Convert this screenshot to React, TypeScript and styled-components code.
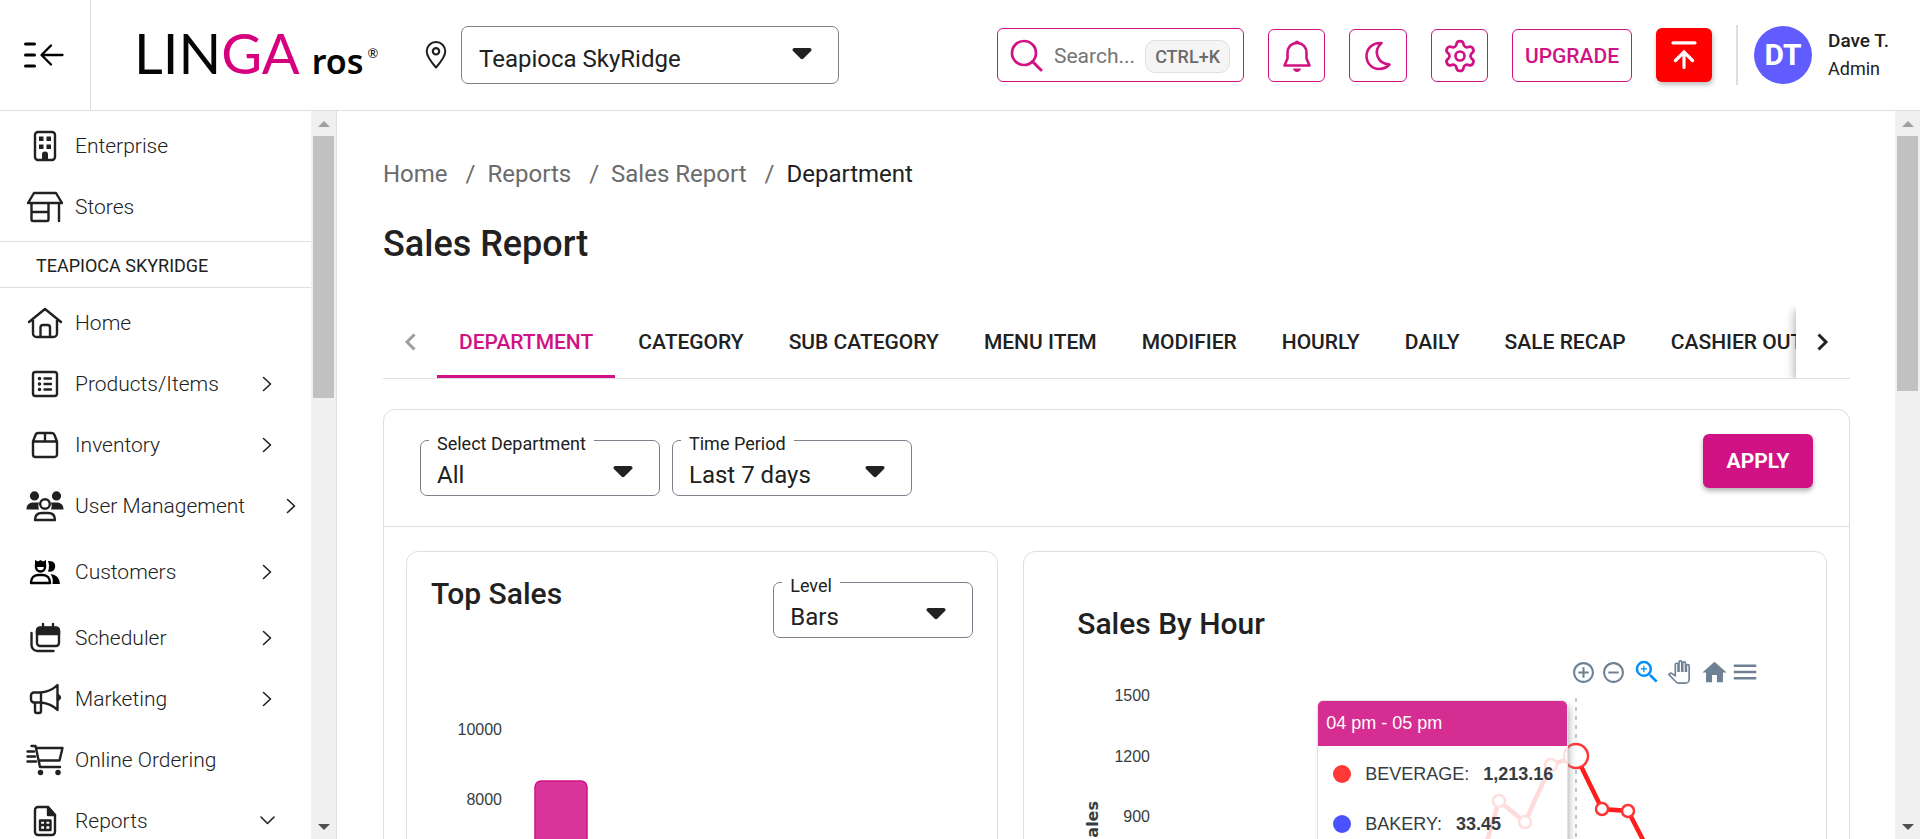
import React from 'react';
import styled, { createGlobalStyle } from 'styled-components';
import { Settings } from 'lucide-react';
import { MdAddCircleOutline, MdHome, MdMenu, MdRemoveCircleOutline, MdZoomIn } from 'react-icons/md';

const color = {
  pink: '#d11284',
  text: '#212121',
  muted: '#757575',
  line: '#dedede',
  outline: '#7d818c',
};

const GlobalStyle = createGlobalStyle`
  *, *::before, *::after { box-sizing: border-box; }
  body {
    margin: 0;
    background: #fff;
    color: ${color.text};
    font-family: Roboto, "Liberation Sans", sans-serif;
    overflow: hidden;
  }
  button, input, select { font: inherit; color: inherit; }
  a { color: inherit; text-decoration: none; }
  svg { display: block; flex: none; }
`;

/* ---------- shell ---------- */

const Page = styled.div`
  display: flex;
  flex-direction: column;
  height: 100vh;
`;

const Header = styled.header`
  display: flex;
  align-items: center;
  flex: none;
  height: 111px;
  border-bottom: 1px solid ${color.line};
`;

const Body = styled.div`
  display: flex;
  flex: 1;
  min-height: 0;
`;

/* ---------- header ---------- */

const MenuToggle = styled.button`
  display: flex;
  align-items: center;
  align-self: stretch;
  width: 91px;
  padding: 0 0 0 24px;
  border: 0;
  border-right: 1px solid ${color.line};
  background: none;
`;

const Logo = styled.a`
  display: flex;
  align-items: baseline;
  width: 244px;
  margin: 0 0 4px 43px;
  color: #050505;
  font-family: Lato, sans-serif;
  font-size: 56px;
  line-height: 64px;
  white-space: nowrap;
`;

const LogoAccent = styled.span`
  color: #d6007f;
`;

const LogoSuffix = styled.span`
  margin-left: 12px;
  font-family: "Noto Sans", sans-serif;
  font-size: 34px;
  font-weight: 600;
  line-height: 36px;
`;

const LogoMark = styled.span`
  margin-left: 4px;
  font-size: 13px;
  line-height: 13px;
  align-self: center;
`;

const StorePicker = styled.label`
  display: flex;
  align-items: center;
  gap: 14px;
  width: 414px;
  margin-left: 47px;
`;

const HeaderTools = styled.div`
  display: flex;
  align-items: center;
  gap: 24px;
  margin-left: auto;
  padding-right: 31px;
`;

const SearchBox = styled.label`
  display: flex;
  align-items: center;
  width: 247px;
  height: 54px;
  padding: 2px 13px 0 12px;
  border: 1px solid ${color.pink};
  border-radius: 6px;
  color: ${color.pink};
`;

const SearchInput = styled.input`
  flex: 1;
  min-width: 0;
  margin-left: 11px;
  padding: 0;
  border: 0;
  outline: 0;
  background: none;
  font-size: 21px;
  color: ${color.muted};
  &::placeholder { color: ${color.muted}; opacity: 1; }
`;

const Shortcut = styled.kbd`
  padding: 0 9px;
  border: 1px solid #e0e0e0;
  border-radius: 10px;
  background: #f5f5f5;
  color: #6b6b6b;
  font-family: inherit;
  font-size: 18px;
  font-weight: 500;
  line-height: 31px;
`;

const OutlineButton = styled.button<{ $width: number }>`
  display: flex;
  align-items: center;
  justify-content: center;
  width: ${(p) => p.$width}px;
  height: 53px;
  padding: 1px 0 0;
  border: 1px solid ${color.pink};
  border-radius: 6px;
  background: #fff;
  color: ${color.pink};
  font-size: 21px;
  font-weight: 500;
`;

const UploadButton = styled.button`
  display: flex;
  align-items: center;
  justify-content: center;
  width: 56px;
  height: 54px;
  padding: 0;
  border: 0;
  border-radius: 6px;
  background: #f00;
  color: #fff;
  box-shadow: 1px 3px 5px rgba(0, 0, 0, 0.25);
`;

const Profile = styled.div`
  display: flex;
  align-items: center;
  height: 60px;
  padding-left: 16px;
  border-left: 2px solid ${color.line};
`;

const Avatar = styled.div`
  width: 58px;
  border-radius: 50%;
  background: #615cff;
  color: #fff;
  font-size: 30px;
  font-weight: 700;
  line-height: 58px;
  text-align: center;
`;

const UserName = styled.div`
  margin-left: 16px;
  font-size: 19px;
  font-weight: 500;
  line-height: 28px;
`;

const UserRole = styled.div`
  font-size: 18px;
  font-weight: 400;
`;

/* ---------- select fields ---------- */

const SelectFrame = styled.fieldset<{ $width?: number; $labelled: boolean }>`
  position: relative;
  display: flex;
  flex: ${(p) => (p.$width ? 'none' : 1)};
  width: ${(p) => (p.$width ? `${p.$width}px` : 'auto')};
  height: ${(p) => (p.$labelled ? 65 : 58)}px;
  min-width: 0;
  margin: 0;
  padding: 0;
  border: 1px solid ${color.outline};
  border-radius: 7px;
`;

const SelectLegend = styled.legend`
  margin-left: 8px;
  padding: 8px 8px 0;
  font-size: 18px;
  line-height: 10px;
`;

const SelectControl = styled.select<{ $labelled: boolean }>`
  width: 100%;
  height: 100%;
  padding: ${(p) => (p.$labelled ? 6 : 8)}px 60px 0 ${(p) => (p.$labelled ? 16 : 17)}px;
  border: 0;
  outline: 0;
  appearance: none;
  background: none;
  font-size: 24px;
`;

const SelectArrow = styled.svg<{ $labelled: boolean }>`
  position: absolute;
  top: ${(p) => (p.$labelled ? 17 : 21)}px;
  right: 26px;
  pointer-events: none;
`;

type SelectProps = { label?: string; name: string; value: string; width?: number };

function SelectField({ label, name, value, width }: SelectProps) {
  return (
    <SelectFrame $width={width} $labelled={!!label}>
      {label && <SelectLegend>{label}</SelectLegend>}
      <SelectControl aria-label={name} defaultValue={value} $labelled={!!label}>
        <option>{value}</option>
      </SelectControl>
      <SelectArrow $labelled={!!label} width="20" height="12" viewBox="0 0 20 12">
        <path d="M2 0H18Q20.5 1 19 3L11.5 10.5Q10 12 8.500 10.500L1 3Q-.5 1 2 0Z" fill="currentColor" />
      </SelectArrow>
    </SelectFrame>
  );
}

/* ---------- sidebar ---------- */

const Sidebar = styled.aside`
  display: flex;
  flex: none;
  width: 337px;
  border-right: 1px solid ${color.line};
`;

const Nav = styled.nav`
  flex: 1;
  overflow: hidden;
`;

const NavGroup = styled.div`
  padding: 4px 0;
`;

const NavHeading = styled.h2`
  margin: 0;
  padding: 2px 0 0 36px;
  border: solid ${color.line};
  border-width: 1px 0;
  font-size: 18px;
  font-weight: 400;
  line-height: 43px;
`;

const NavLink = styled.a<{ $tall?: boolean; $wide?: boolean }>`
  display: flex;
  align-items: center;
  gap: 11px;
  height: ${(p) => (p.$tall ? 71 : 61)}px;
  padding: 0 ${(p) => (p.$wide ? 12 : 36)}px 0 26px;
  font-size: 21px;
`;

const NavText = styled.span`
  flex: 1;
  font-weight: 300;
`;

const Track = styled.div`
  display: flex;
  flex-direction: column;
  flex: none;
  width: 25px;
  background: #f0f0f0;
`;

const TrackEnd = styled.div<{ $shade: string }>`
  display: flex;
  align-items: center;
  justify-content: center;
  height: 25px;
  color: ${(p) => p.$shade};
`;

const Thumb = styled.div<{ $share: number }>`
  height: ${(p) => p.$share}%;
  margin: 0 2px;
  background: #c1c1c1;
`;

const ThumbArea = styled.div`
  flex: 1;
`;

function Scrollbar({ share }: { share: number }) {
  return (
    <Track aria-hidden="true">
      <TrackEnd $shade="#a0a0a0">
        <svg width="12" height="6" viewBox="0 0 12 6"><path d="M6 0l6 6H0z" fill="currentColor" /></svg>
      </TrackEnd>
      <ThumbArea><Thumb $share={share} /></ThumbArea>
      <TrackEnd $shade="#505050">
        <svg width="12" height="6" viewBox="0 0 12 6"><path d="M0 0h12L6 6z" fill="currentColor" /></svg>
      </TrackEnd>
    </Track>
  );
}

const icons: Record<string, React.ReactNode> = {
  Enterprise: (
    <>
      <rect x="9" y="2" width="20" height="28" rx="3" />
      <path d="M13 6.500h4.500v4.500H13zM20.500 6.500H25v4.500h-4.500zM13 14.500h4.500V19H13zM20.500 14.500H25V19h-4.500zM16 30v-5.500a3 3 0 0 1 6 0V30z" fill="currentColor" stroke="none" />
    </>
  ),
  Stores: <path d="M8 2h22l6 10H2zM5.500 12v16.500a1.500 1.500 0 0 0 1.500 1.500h14a1.500 1.500 0 0 0 1.500-1.500V12M5.500 21h17M33 12v18" />,
  Home: <path d="M3 15L19 2l16 13M7 13v13.500A3.500 3.500 0 0 0 10.500 30h17a3.500 3.500 0 0 0 3.500-3.500V13M14.500 30V20.500A2.500 2.500 0 0 1 17 18h4.500a2.500 2.500 0 0 1 2.500 2.500V30" />,
  'Products/Items': (
    <>
      <rect x="7" y="4" width="24" height="24" rx="2.500" />
      <path d="M18.500 10.500H25M18.500 16H25M18.500 21.500H25" />
      <path d="M13.500 10.500h.01M13.500 16h.01M13.500 21.500h.01" strokeWidth="3.600" />
    </>
  ),
  Inventory: <path d="M7 12.500L9.500 6A3 3 0 0 1 12.500 4h13a3 3 0 0 1 3 2L31 12.500V25.500a2.500 2.500 0 0 1-2.500 2.500h-19A2.500 2.500 0 0 1 7 25.500V12.500H31M19 4v8.500" />,
  'User Management': (
    <>
      <path d="M8.500 1.300a4.600 4.600 0 1 1 0 9.200a4.600 4.600 0 0 1 0-9.200zM30.500 1.300a4.600 4.600 0 1 1 0 9.200a4.600 4.600 0 0 1 0-9.200zM.5 19.500C.5 14 4 12.500 8 12.500h5q-1.500 3.500 0 7zM37.500 19.500C37.500 14 34 12.500 30 12.500h-5q1.500 3.500 0 7z" fill="currentColor" stroke="none" />
      <circle cx="19" cy="14" r="4.800" />
      <path d="M9 30c0-5 3-7 7-7h6c4 0 7 2 7 7z" />
    </>
  ),
  Customers: (
    <g color="#000" stroke="#000">
      <path d="M9 4l3 1.500L14.500 4l2.500 1.500L20 4v7H9zM22 5c6-.5 8 3 7 7q-2 5-7 3.500q2-5 0-10.500zM24.500 18q9 1 9.500 10h-7.500q1-6-2-10z" fill="currentColor" stroke="none" />
      <path d="M10 9v2c0 6 9 6 9 0V9zM5 27c0-5 3-8 7-8h5c4 0 7 3 7 8z" />
    </g>
  ),
  Scheduler: (
    <>
      <rect x="11" y="6" width="22" height="18" rx="3" />
      <path d="M11 12V8.500A3 3 0 0 1 14 5.500h16a3 3 0 0 1 3 3V12z" fill="currentColor" />
      <path d="M17 2v3M27 2v3M5.500 11v12a6 6 0 0 0 6 6H27.500" />
    </>
  ),
  Marketing: (
    <>
      <path d="M15 9.500H8A3 3 0 0 0 5 12.500v4A3 3 0 0 0 8 19.500h7zQ25 8.500 31.500 2v25Q25 20.500 15 19.500M9 20v8a2 2 0 0 0 2 2h2a2 2 0 0 0 2-2V20" />
      <path d="M32 12q4 2.500 0 5z" fill="currentColor" />
    </>
  ),
  'Online Ordering': (
    <>
      <path d="M5.500 2H9.500L14 23H34M10 4H36.500L33.500 16.500H13M1.500 7.500H8M1.500 12.500H9M1.500 17.500H10" />
      <path d="M14.500 28.500h.01M32 28.500h.01" strokeWidth="5.500" />
    </>
  ),
  Reports: (
    <>
      <path d="M12 2H22l7 8v17a3 3 0 0 1-3 3H12a3 3 0 0 1-3-3V5a3 3 0 0 1 3-3zM14 15.500H24.500V25H14zM14 20H24.500M19.200 15.500V25" />
      <path d="M22 2v8h7z" fill="currentColor" />
    </>
  ),
};

function NavItem({ label, arrow }: { label: string; arrow?: 'right' | 'down' }) {
  return (
    <NavLink href="#" $tall={label === 'Customers'} $wide={label === 'User Management'}>
      <svg width="38" height="32" viewBox="0 0 38 32" fill="none" stroke="currentColor" strokeWidth="2.400" strokeLinecap="round" strokeLinejoin="round">
        {icons[label]}
      </svg>
      <NavText>{label}</NavText>
      {arrow && (
        <svg width="16" height="16" viewBox="0 0 16 16" fill="none" stroke="currentColor" strokeWidth="1.600" strokeLinecap="round" strokeLinejoin="round">
          <path d={arrow === 'right' ? 'M4.500 1.500L11.500 8l-7 6.500' : 'M2 4L8.500 10.500l6.500-6.500'} />
        </svg>
      )}
    </NavLink>
  );
}

/* ---------- main ---------- */

const Main = styled.main`
  flex: 1;
  min-width: 0;
  padding: 48px 45px 0 46px;
  overflow: hidden;
`;

const Breadcrumb = styled.nav`
  display: flex;
  color: #6b6b6b;
  font-size: 24px;
  line-height: 30px;
`;

const Crumb = styled.a<{ $current?: boolean }>`
  color: ${(p) => (p.$current ? color.text : 'inherit')};
  &:not(:first-child)::before {
    content: '/';
    margin: 0 12px 0 18px;
    color: #6b6b6b;
  }
`;

const Title = styled.h1`
  margin: 32px 0 0;
  font-size: 36px;
  font-weight: 500;
  line-height: 46px;
`;

const TabBar = styled.div`
  display: flex;
  height: 73px;
  margin-top: 39px;
  border-bottom: 1px solid ${color.line};
`;

const TabList = styled.div`
  display: flex;
  flex: 1;
  gap: 1px;
  min-width: 0;
  overflow: hidden;
`;

const Tab = styled.button<{ $active?: boolean }>`
  flex: none;
  padding: 3px 22px 0;
  border: 0;
  border-bottom: 3px solid ${(p) => (p.$active ? color.pink : 'transparent')};
  background: none;
  color: ${(p) => (p.$active ? color.pink : color.text)};
  font-size: 21px;
  font-weight: 500;
`;

const TabScroll = styled.button<{ $disabled?: boolean }>`
  display: flex;
  align-items: center;
  justify-content: center;
  width: 54px;
  padding: 0;
  border: 0;
  background: #fff;
  color: ${(p) => (p.$disabled ? '#9e9e9e' : color.text)};
  box-shadow: ${(p) => (p.$disabled ? 'none' : '0 4px 10px rgba(0, 0, 0, 0.4)')};
  clip-path: inset(0 0 0 -20px);
`;

const Panel = styled.section`
  margin-top: 30px;
  border: 1px solid ${color.line};
  border-radius: 12px;
`;

const Filters = styled.form`
  display: flex;
  align-items: flex-start;
  gap: 12px;
  height: 117px;
  padding: 21px 36px 0;
  border-bottom: 1px solid ${color.line};
`;

const ApplyButton = styled.button`
  width: 110px;
  height: 54px;
  margin: 3px 0 0 auto;
  border: 0;
  border-radius: 6px;
  background: ${color.pink};
  color: #fff;
  font-size: 21px;
  font-weight: 700;
  box-shadow: 0 3px 5px rgba(0, 0, 0, 0.3);
`;

const Cards = styled.div`
  display: grid;
  grid-template-columns: 14fr 19fr;
  gap: 25px;
  padding: 24px 22px;
`;

const Card = styled.article`
  min-width: 0;
  height: 620px;
  border: 1px solid ${color.line};
  border-radius: 12px;
  overflow: hidden;
`;

const CardHead = styled.div`
  display: flex;
  justify-content: space-between;
  height: 136px;
  padding: 21px 24px 0;
`;

const CardTitle = styled.h2`
  margin: 0;
  font-size: 30px;
  font-weight: 500;
  line-height: 42px;
`;

const HourTitle = styled(CardTitle)`
  padding: 51px 53px 0;
`;

const Toolbar = styled.div`
  display: flex;
  align-items: center;
  justify-content: flex-end;
  height: 28px;
  margin-top: 13px;
  padding-right: 66px;
`;

const Tool = styled.button<{ $active?: boolean; $gap?: number }>`
  margin: 0 0 0 ${(p) => p.$gap ?? 0}px;
  padding: 0;
  border: 0;
  background: none;
  color: ${(p) => (p.$active ? '#008ffb' : '#6e8192')};
`;

const Plot = styled.div`
  position: relative;
`;

const AxisText = styled.text`
  fill: #373d3f;
  font-family: "Liberation Sans", sans-serif;
  font-size: 16px;
  text-anchor: end;
`;

const AxisTitle = styled(AxisText)`
  font-family: "DejaVu Sans", sans-serif;
  font-weight: 700;
`;

const Tooltip = styled.div`
  position: absolute;
  top: 14px;
  left: 293px;
  width: 251px;
  height: 210px;
  border: 1px solid #e3e3e3;
  border-radius: 6px;
  background: rgba(255, 255, 255, 0.84);
  box-shadow: 3px 3px 8px -3px #999;
  font-family: "Liberation Sans", sans-serif;
  font-size: 18px;
  overflow: hidden;
`;

const TooltipTitle = styled.div`
  padding: 0 8px;
  background: #d62d93;
  color: #fff;
  line-height: 45px;
`;

const TooltipRow = styled.div<{ $dot: string }>`
  display: flex;
  align-items: center;
  gap: 14px;
  height: 50px;
  padding: 6px 0 0 15px;
  color: #373d3f;
  white-space: nowrap;
  &::before {
    content: '';
    flex: none;
    width: 18px;
    height: 18px;
    border-radius: 50%;
    background: ${(p) => p.$dot};
  }
`;

const tabs = ['DEPARTMENT', 'CATEGORY', 'SUB CATEGORY', 'MENU ITEM', 'MODIFIER', 'HOURLY', 'DAILY', 'SALE RECAP', 'CASHIER OUT'];

const hours: [number, number][] = [[450, 199], [475, 115], [501, 136], [527, 79], [552, 70], [578, 123], [604, 125], [630, 175]];

function TopSales() {
  return (
    <Card>
      <CardHead>
        <CardTitle>Top Sales</CardTitle>
        <SelectField label="Level" name="Level" value="Bars" width={200} />
      </CardHead>
      <svg width="100%" height="400" role="img" aria-label="Top sales by department">
        <AxisText x="95" y="47">10000</AxisText>
        <AxisText x="95" y="117">8000</AxisText>
        <rect x="128" y="93" width="52" height="400" rx="6" fill="#d9359a" stroke={color.pink} strokeWidth="1.500" />
      </svg>
    </Card>
  );
}

function SalesByHour() {
  return (
    <Card>
      <HourTitle>Sales By Hour</HourTitle>
      <Toolbar>
        <Tool type="button" aria-label="Zoom in"><MdAddCircleOutline size={25} /></Tool>
        <Tool type="button" aria-label="Zoom out" $gap={5}><MdRemoveCircleOutline size={25} /></Tool>
        <Tool type="button" aria-label="Selection zoom" $active $gap={6}><MdZoomIn size={30} /></Tool>
        <Tool type="button" aria-label="Pan" $gap={5}>
          <svg width="24" height="24" viewBox="-1 -1 26 26" fill="#fff" stroke="currentColor" strokeWidth="1.800">
            <path d="M23 5.500V20c0 2.200-1.800 4-4 4h-7.300c-1.080 0-2.100-.43-2.850-1.190L1 14.830s1.260-1.230 1.300-1.250c.22-.19.49-.29.79-.29.22 0 .42.06.6.16.04.01 4.310 2.460 4.310 2.460V4c0-.83.67-1.500 1.500-1.500S11 3.170 11 4v7h1V1.500c0-.83.67-1.500 1.500-1.500S15 .67 15 1.500V11h1V2.500c0-.83.67-1.500 1.500-1.500s1.500.67 1.500 1.500V11h1V5.500c0-.83.67-1.500 1.500-1.500s1.500.67 1.500 1.500z" />
          </svg>
        </Tool>
        <Tool type="button" aria-label="Reset zoom" $gap={9}><MdHome size={29} /></Tool>
        <Tool type="button" aria-label="Menu" $gap={1}><MdMenu size={30} /></Tool>
      </Toolbar>
      <Plot>
        <svg width="100%" height="400" role="img" aria-label="Sales by hour">
          <AxisText x="126" y="15">1500</AxisText>
          <AxisText x="126" y="76">1200</AxisText>
          <AxisText x="126" y="136">900</AxisText>
          <AxisTitle transform="translate(74 115) rotate(-90)">Sales</AxisTitle>
          <path d="M552 12V400" stroke="#b6b6b6" strokeWidth="1.500" strokeDasharray="4 5" />
          <polyline points={hours.map((h) => h.join(',')).join(' ')} fill="none" stroke="#ff1c1c" strokeWidth="4.500" />
          {hours.map(([x, y]) => (
            <circle key={x} cx={x} cy={y} r={x === 552 ? 12 : 6} fill="#fff" stroke="#ff3535" strokeWidth="2.500" />
          ))}
        </svg>
        <Tooltip>
          <TooltipTitle>04 pm - 05 pm</TooltipTitle>
          <TooltipRow $dot="#ff3838">BEVERAGE: <b>1,213.16</b></TooltipRow>
          <TooltipRow $dot="#4a52ff">BAKERY: <b>33.45</b></TooltipRow>
        </Tooltip>
      </Plot>
    </Card>
  );
}

export default function App() {
  return (
    <Page>
      <GlobalStyle />
      <Header>
        <MenuToggle type="button" aria-label="Collapse menu">
          <svg width="40" height="28" viewBox="0 0 40 28" fill="none" stroke="#000" strokeLinecap="round" strokeLinejoin="round">
            <path d="M1.500 3h9M1.500 14h9M1.500 25h9" strokeWidth="3" />
            <path d="M38.500 14H18M27 4.500L17.500 14l9.500 9.500" strokeWidth="2.300" />
          </svg>
        </MenuToggle>
        <Logo href="#">
          LIN<LogoAccent>GA</LogoAccent><LogoSuffix>ros</LogoSuffix><LogoMark>®</LogoMark>
        </Logo>
        <StorePicker>
          <svg width="22" height="28" viewBox="0 0 22 28" fill="none" stroke="currentColor" strokeWidth="2">
            <path d="M11 1a9.300 9.300 0 0 1 9.300 9.300C20.300 16 14.500 22.500 11 26.500C7.500 22.500 1.700 16 1.700 10.300A9.300 9.300 0 0 1 11 1z" strokeLinejoin="round" />
            <circle cx="11" cy="10.300" r="3.200" strokeWidth="2.200" />
          </svg>
          <SelectField name="Store" value="Teapioca SkyRidge" />
        </StorePicker>
        <HeaderTools>
          <SearchBox>
            <svg width="33" height="34" viewBox="0 0 33 34" fill="none" stroke="currentColor" strokeWidth="2.700" strokeLinecap="round">
              <circle cx="14" cy="14" r="12" />
              <path d="M22.500 22.500L31 31" strokeWidth="3" />
            </svg>
            <SearchInput placeholder="Search..." aria-label="Search" />
            <Shortcut>CTRL+K</Shortcut>
          </SearchBox>
          <OutlineButton type="button" aria-label="Notifications" $width={57}>
            <svg width="30" height="34" viewBox="0 0 30 34" fill="none" stroke="currentColor" strokeWidth="2.600" strokeLinejoin="round">
              <path d="M15 4c-6 0-9.500 4.500-9.500 10v5.500L2.500 26.500h25l-3-7V14C24.500 8.500 21 4 15 4z" />
              <path d="M13 4a2 2 0 0 1 4 0zM11.500 30h7c-.8 3.300-6.200 3.300-7 0z" fill="currentColor" strokeWidth="1" />
            </svg>
          </OutlineButton>
          <OutlineButton type="button" aria-label="Dark mode" $width={58}>
            <svg width="28" height="30" viewBox="0 0 28 30" fill="none" stroke="currentColor" strokeWidth="2.600" strokeLinejoin="round">
              <path d="M17.500 2C8 1.500 2.500 8 2.500 15c0 7.500 6 13 12.500 13 4.500 0 8-1.800 10.500-4.500C13.500 23 8.500 10 17.500 2z" />
            </svg>
          </OutlineButton>
          <OutlineButton type="button" aria-label="Settings" $width={57}><Settings size={36} strokeWidth={1.800} /></OutlineButton>
          <OutlineButton type="button" $width={120}>UPGRADE</OutlineButton>
          <UploadButton type="button" aria-label="Upload">
            <svg width="26" height="28" viewBox="0 0 26 28" fill="none" stroke="currentColor" strokeWidth="3.200" strokeLinecap="round">
              <path d="M2 1.800h22M13 26.500V11M4.500 19.500L13 11l8.500 8.500" />
            </svg>
          </UploadButton>
          <Profile>
            <Avatar>DT</Avatar>
            <UserName>
              Dave T.
              <UserRole>Admin</UserRole>
            </UserName>
          </Profile>
        </HeaderTools>
      </Header>
      <Body>
        <Sidebar>
          <Nav aria-label="Main">
            <NavGroup>
              <NavItem label="Enterprise" />
              <NavItem label="Stores" />
            </NavGroup>
            <NavHeading>TEAPIOCA SKYRIDGE</NavHeading>
            <NavGroup>
              <NavItem label="Home" />
              <NavItem label="Products/Items" arrow="right" />
              <NavItem label="Inventory" arrow="right" />
              <NavItem label="User Management" arrow="right" />
              <NavItem label="Customers" arrow="right" />
              <NavItem label="Scheduler" arrow="right" />
              <NavItem label="Marketing" arrow="right" />
              <NavItem label="Online Ordering" />
              <NavItem label="Reports" arrow="down" />
            </NavGroup>
          </Nav>
          <Scrollbar share={38.6} />
        </Sidebar>
        <Main>
          <Breadcrumb aria-label="Breadcrumb">
            <Crumb href="#">Home</Crumb>
            <Crumb href="#">Reports</Crumb>
            <Crumb href="#">Sales Report</Crumb>
            <Crumb href="#" $current>Department</Crumb>
          </Breadcrumb>
          <Title>Sales Report</Title>
          <TabBar>
            <TabScroll type="button" aria-label="Previous tabs" $disabled>
              <svg width="12" height="18" viewBox="0 0 12 18" fill="none" stroke="currentColor" strokeWidth="3"><path d="M10.500 1.500L3 9l7.500 7.500" /></svg>
            </TabScroll>
            <TabList role="tablist">
              {tabs.map((t, i) => (
                <Tab key={t} type="button" role="tab" aria-selected={i === 0} $active={i === 0}>{t}</Tab>
              ))}
            </TabList>
            <TabScroll type="button" aria-label="Next tabs">
              <svg width="12" height="18" viewBox="0 0 12 18" fill="none" stroke="currentColor" strokeWidth="3"><path d="M1.500 1.500L9 9l-7.500 7.500" /></svg>
            </TabScroll>
          </TabBar>
          <Panel>
            <Filters>
              <SelectField label="Select Department" name="Select Department" value="All" width={240} />
              <SelectField label="Time Period" name="Time Period" value="Last 7 days" width={240} />
              <ApplyButton type="button">APPLY</ApplyButton>
            </Filters>
            <Cards>
              <TopSales />
              <SalesByHour />
            </Cards>
          </Panel>
        </Main>
        <Scrollbar share={37.6} />
      </Body>
    </Page>
  );
}
